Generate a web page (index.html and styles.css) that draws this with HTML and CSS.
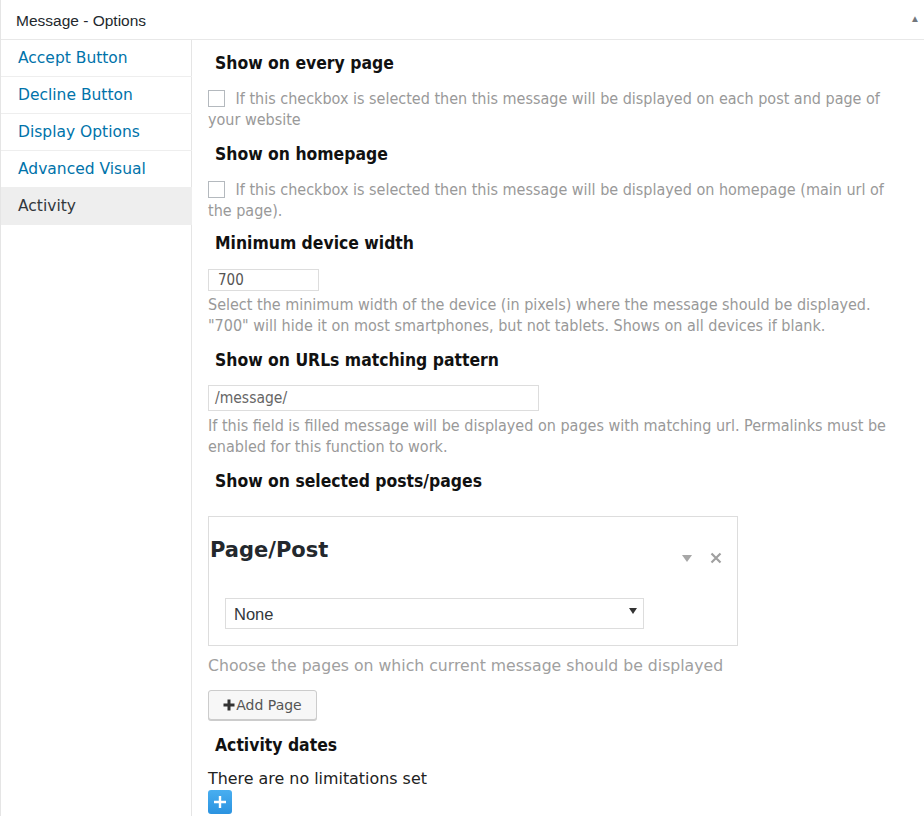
FILE: index.html
```html
<!DOCTYPE html>
<html>
<head>
<meta charset="utf-8">
<link rel="stylesheet" href="styles.css">
</head>
<body>
<div class="postbox">
  <div class="box-header">
    <span class="box-title">Message - Options</span>
    <span class="toggle">&#9650;</span>
  </div>
  <div class="box-body">
    <ul class="tabs">
      <li class="tab">Accept Button</li>
      <li class="tab">Decline Button</li>
      <li class="tab">Display Options</li>
      <li class="tab">Advanced Visual</li>
      <li class="tab active">Activity</li>
    </ul>
    <div class="panel">
      <h3 class="h h1st">Show on every page</h3>
      <p class="desc chk-desc"><span class="checkbox"></span> If this checkbox is selected then this message will be displayed on each post and page of your website</p>

      <h3 class="h h-after-desc">Show on homepage</h3>
      <p class="desc chk-desc"><span class="checkbox"></span> If this checkbox is selected then this message will be displayed on homepage (main url of the page).</p>

      <h3 class="h h-after-desc2">Minimum device width</h3>
      <div class="input small-input">700</div>
      <p class="desc after-input">Select the minimum width of the device (in pixels) where the message should be displayed. "700" will hide it on most smartphones, but not tablets. Shows on all devices if blank.</p>

      <h3 class="h h-after-desc">Show on URLs matching pattern</h3>
      <div class="input url-input">/message/</div>
      <p class="desc after-input2">If this field is filled message will be displayed on pages with matching url. Permalinks must be enabled for this function to work.</p>

      <h3 class="h h-after-desc">Show on selected posts/pages</h3>
      <div class="page-box">
        <div class="page-box-head">
          <span class="page-title">Page/Post</span>
          <span class="page-tools">
            <svg class="tool-arrow" width="10" height="7" viewBox="0 0 10 7"><path d="M0 0h10L5 7z" fill="#a7a7a7"/></svg>
            <svg class="tool-close" width="12" height="12" viewBox="0 0 12 12"><path d="M1.5 1.5l9 9M10.5 1.5l-9 9" stroke="#a0a0a0" stroke-width="2.2"/></svg>
          </span>
        </div>
        <div class="select">
          <span>None</span>
          <svg width="8" height="6" viewBox="0 0 8 6"><path d="M0 0h8L4 6z" fill="#333"/></svg>
        </div>
      </div>
      <p class="desc choose">Choose the pages on which current message should be displayed</p>
      <div class="button"><svg width="12" height="12" viewBox="0 0 12 12"><path d="M6 0.5v11M0.5 6h11" stroke="#333" stroke-width="3"/></svg>Add Page</div>

      <h3 class="h h-activity">Activity dates</h3>
      <p class="nolimit">There are no limitations set</p>
      <div class="add-icon"><svg width="14" height="14" viewBox="0 0 14 14"><path d="M7 1v12M1 7h12" stroke="#fff" stroke-width="2.4"/></svg></div>
    </div>
  </div>
</div>
</body>
</html>
```
FILE: styles.css
```css
html, body {
  margin: 0;
  padding: 0;
  background: #fff;
}
body {
  font-family: "Liberation Sans", Arial, sans-serif;
  color: #23282d;
  width: 924px;
  height: 816px;
  overflow: hidden;
}
.postbox {
  border-left: 1px solid #e5e5e5;
  margin-left: 0;
  height: 816px;
  display: flex;
  flex-direction: column;
}
.box-header {
  height: 39px;
  border-bottom: 1px solid #e8e8e8;
  display: flex;
  align-items: center;
  justify-content: space-between;
  padding-left: 15px;
  flex: none;
}
.box-title {
  font-family: "Liberation Sans", Arial, sans-serif;
  font-size: 15.5px;
  color: #23282d;
  position: relative;
  top: 1px;
}
.toggle {
  font-size: 10px;
  color: #72777c;
  margin-right: 4px;
  position: relative;
  top: -1px;
}
.box-body {
  display: flex;
  flex: 1;
}
.tabs {
  list-style: none;
  margin: 0;
  padding: 0;
  width: 190px;
  border-right: 1px solid #e5e5e5;
  flex: none;
}
.tab {
  font-family: "DejaVu Sans", Verdana, sans-serif;
  font-size: 15.5px;
  color: #0073aa;
  height: 36px;
  line-height: 36px;
  padding-left: 17px;
  border-bottom: 1px solid #eee;
  margin-right: -1px;
}
.tab.active {
  color: #32373c;
  background: #eee;
  border-bottom: none;
  height: 37px;
  margin-right: -1px;
}
.panel {
  padding-left: 16px;
  flex: 1;
  min-width: 0;
}
.h {
  font-family: "DejaVu Sans Condensed", "DejaVu Sans", sans-serif;
  font-stretch: condensed;
  font-weight: bold;
  font-size: 17.4px;
  line-height: 24px;
  margin: 0 0 0 7px;
  color: #111;
}
.h1st { margin-top: 11px; }
.h-after-desc { margin-top: 12px; }
.h-after-desc2 { margin-top: 10px; }
.desc {
  font-family: "DejaVu Sans Condensed", "DejaVu Sans", sans-serif;
  font-stretch: condensed;
  font-size: 16px;
  line-height: 21px;
  color: #999;
  margin: 0;
  padding-right: 26px;
}
.chk-desc { margin-top: 13px; }
.checkbox {
  display: inline-block;
  width: 15px;
  height: 15px;
  border: 1px solid #b4b9be;
  vertical-align: -3px;
  margin-right: 6px;
  background: #fff;
}
.input {
  border: 1px solid #ddd;
  box-sizing: border-box;
  color: #555;
}
.small-input {
  width: 111px;
  height: 22px;
  line-height: 20px;
  padding-left: 9px;
  margin-top: 14px;
  font-family: "DejaVu Sans Condensed", "DejaVu Sans", sans-serif;
  font-stretch: condensed;
  font-size: 15px;
}
.url-input {
  width: 331px;
  height: 26px;
  line-height: 24px;
  padding-left: 6px;
  margin-top: 13px;
  font-family: "DejaVu Sans Condensed", "DejaVu Sans", sans-serif;
  font-stretch: condensed;
  font-size: 15.5px;
  color: #666;
}
.after-input { margin-top: 3px; }
.after-input2 { margin-top: 4px; }
.page-box {
  margin-top: 23px;
  width: 530px;
  height: 130px;
  box-sizing: border-box;
  border: 1px solid #ddd;
  padding: 0 0 0 1px;
}
.page-box-head {
  display: flex;
  justify-content: space-between;
  align-items: flex-start;
  height: 80px;
}
.page-title {
  font-family: "DejaVu Sans", Verdana, sans-serif;
  font-weight: bold;
  font-size: 21px;
  line-height: 26px;
  margin-top: 20px;
  color: #23282d;
}
.page-tools {
  display: flex;
  align-items: center;
  margin-top: 35px;
  margin-right: 15px;
  gap: 18px;
}
.tool-arrow { margin-top: 1px; }
.select {
  margin-left: 15px;
  margin-top: 1px;
  width: 419px;
  height: 31px;
  box-sizing: border-box;
  border: 1px solid #ddd;
  display: flex;
  align-items: center;
  justify-content: space-between;
  padding: 0 6px 0 8px;
  font-family: "Liberation Sans", Arial, sans-serif;
  font-size: 16.5px;
  color: #32373c;
}
.select span { position: relative; top: 1px; }
.select svg { margin-top: -5px; }
.choose {
  font-family: "DejaVu Sans", Verdana, sans-serif;
  font-stretch: normal;
  font-size: 15.7px;
  margin-top: 9px;
  color: #a0a0a0;
}
.button {
  margin-top: 14px;
  width: 109px;
  height: 30px;
  box-sizing: border-box;
  border: 1px solid #ccc;
  border-radius: 3px;
  background: #f7f7f7;
  box-shadow: 0 1px 0 #ccc;
  display: flex;
  align-items: center;
  justify-content: center;
  font-family: "DejaVu Sans", Verdana, sans-serif;
  font-size: 14px;
  color: #555;
}
.button svg { margin-right: 1px; margin-top: -1px; }
.h-activity { margin-top: 13px; }
.nolimit {
  margin: 12px 0 0 0;
  font-family: "DejaVu Sans", Verdana, sans-serif;
  font-size: 15.9px;
  line-height: 20px;
  color: #222;
}
.add-icon {
  margin-top: 1px;
  width: 24px;
  height: 24px;
  border-radius: 3px;
  background: linear-gradient(#48aef0, #2b93e0);
  display: flex;
  align-items: center;
  justify-content: center;
}
```
